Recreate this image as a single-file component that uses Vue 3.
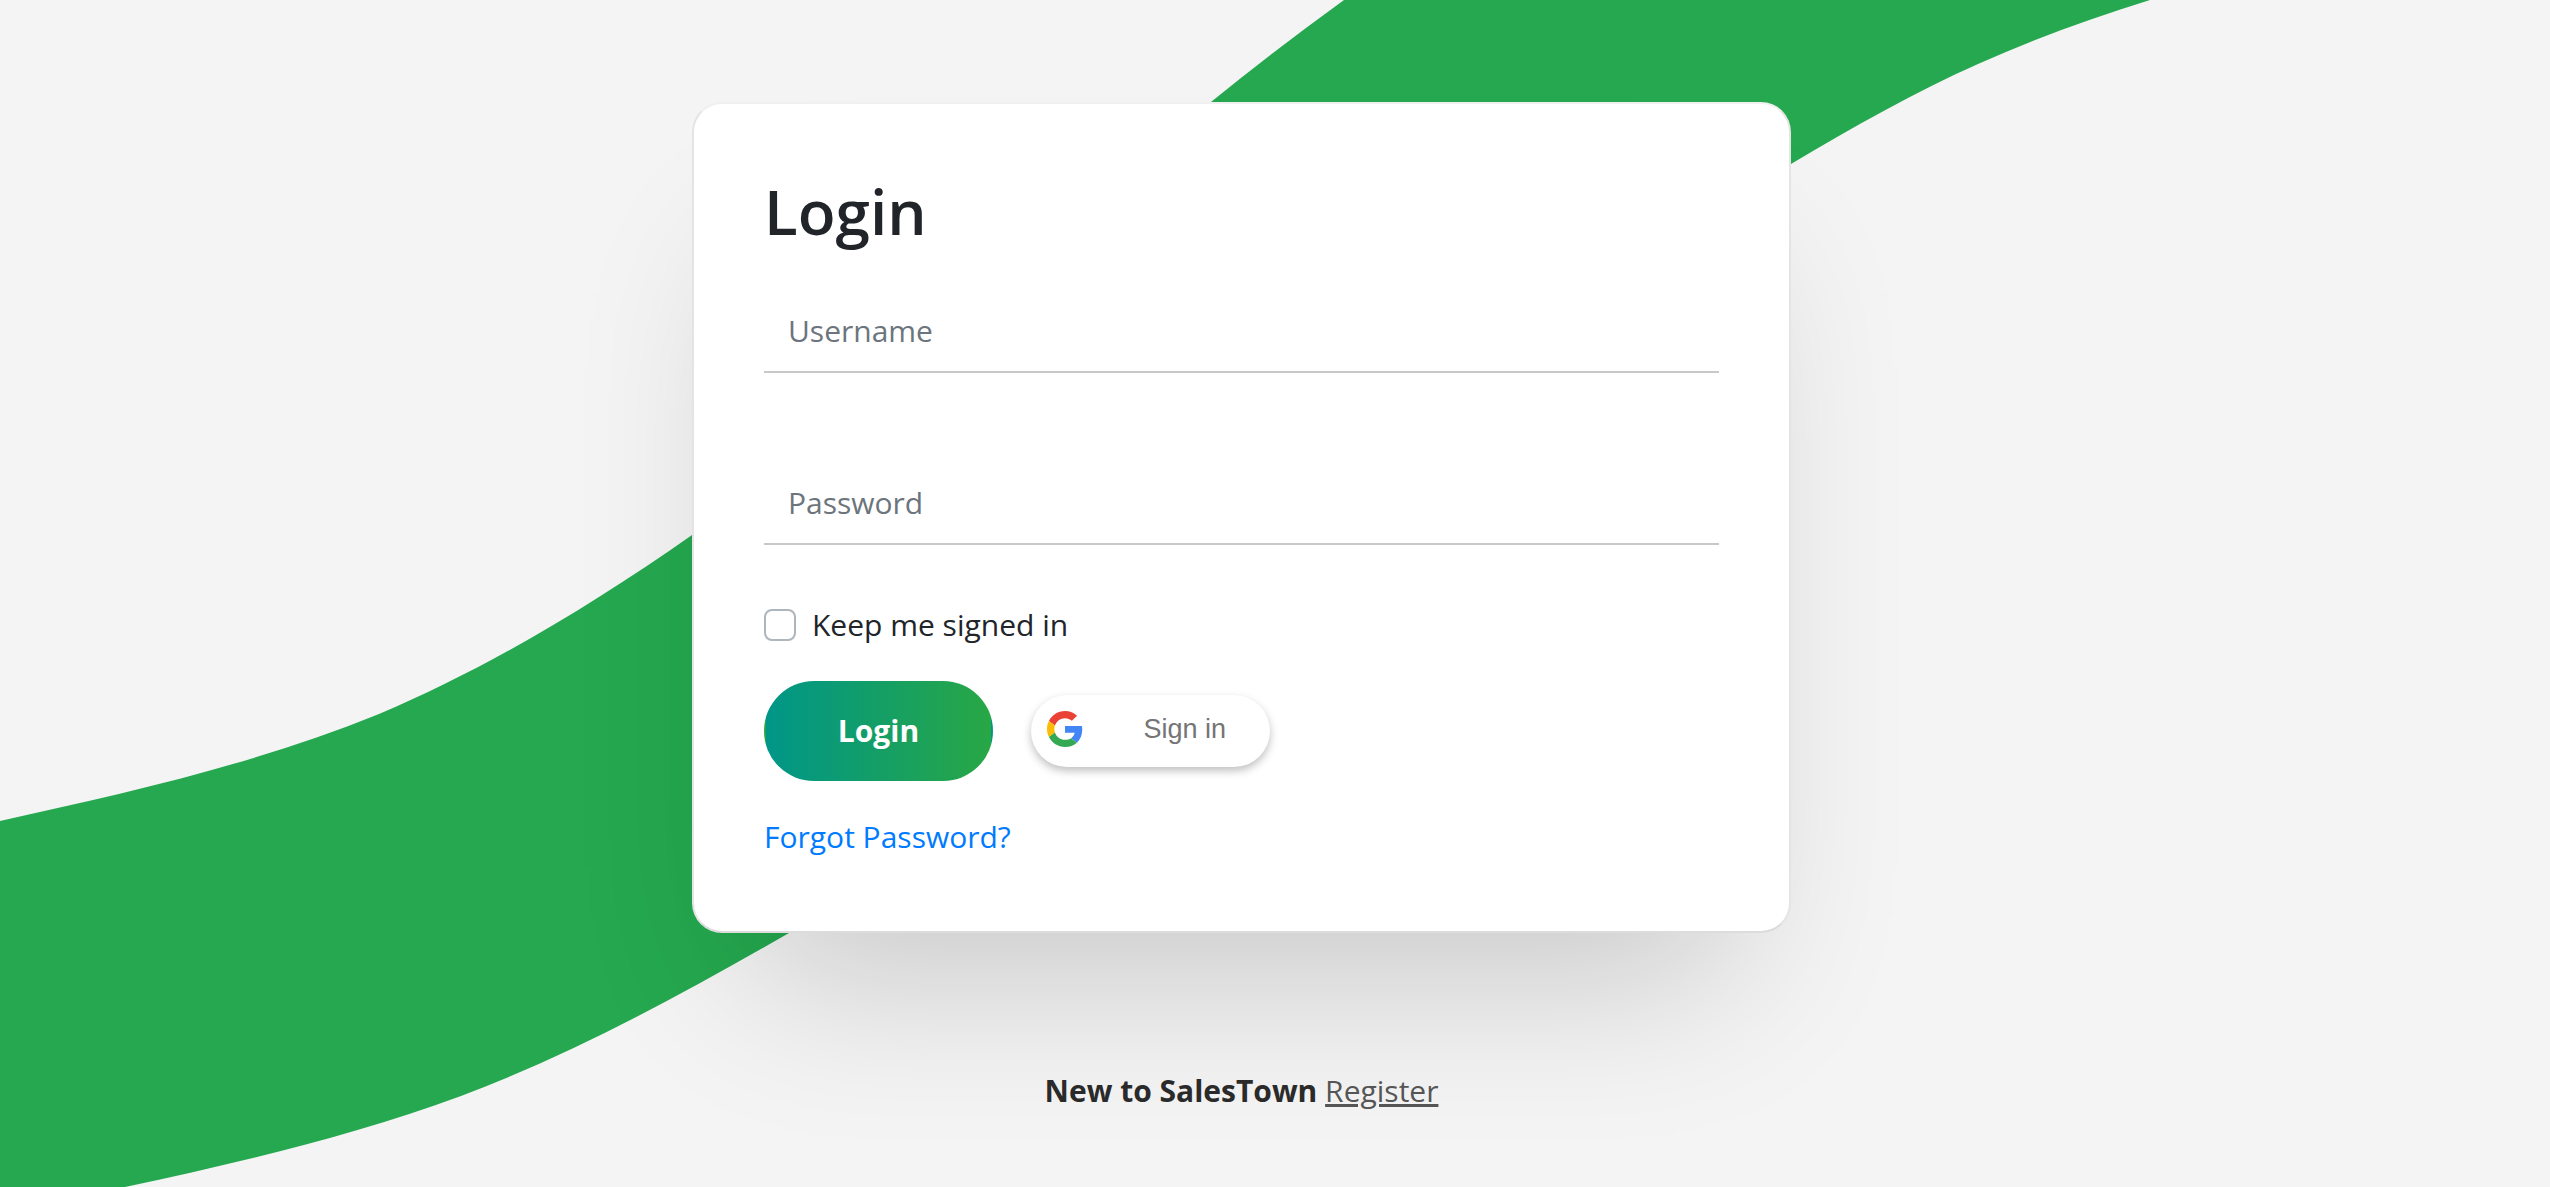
<script setup>
import { ref } from 'vue'

const username = ref('')
const password = ref('')
const remember = ref(false)
</script>

<template>
  <div class="page">
    <svg class="ribbon" viewBox="0 0 2550 1187" preserveAspectRatio="none" aria-hidden="true">
      <path
        d="M0 821C126 793 253 765 379 714C483 670 588 608 692 535C880 400 1040 245 1211 102Q1275 50 1344 0H2150C2092 18 2034 39 1978 64C1915 92 1853 127 1791 164C1440 380 1140 700 789 933C680 996 570 1055 461 1096C349 1137 237 1163 125 1187L0 1213Z"
      />
    </svg>

    <main class="content">
      <form class="card" @submit.prevent>
        <h1>Login</h1>
        <input v-model="username" class="field" type="text" placeholder="Username" aria-label="Username" />
        <input v-model="password" class="field" type="password" placeholder="Password" aria-label="Password" />
        <label class="remember">
          <input v-model="remember" type="checkbox" />
          <span>Keep me signed in</span>
        </label>
        <div class="actions">
          <button class="login" type="submit">Login</button>
          <button class="google" type="button">
            <svg viewBox="0 0 48 48" aria-hidden="true">
              <path fill="#ea4335" d="M24 9.5c3.54 0 6.71 1.22 9.21 3.6l6.85-6.85C35.9 2.38 30.47 0 24 0 14.62 0 6.51 5.38 2.56 13.22l7.98 6.19C12.43 13.72 17.74 9.5 24 9.5z" />
              <path fill="#4285f4" d="M46.98 24.55c0-1.57-.15-3.09-.38-4.55H24v9.02h12.94c-.58 2.96-2.26 5.48-4.78 7.18l7.73 6c4.51-4.18 7.09-10.36 7.09-17.65z" />
              <path fill="#fbbc05" d="M10.53 28.59c-.48-1.45-.76-2.99-.76-4.59s.27-3.14.76-4.59l-7.98-6.19C.92 16.46 0 20.12 0 24c0 3.88.92 7.54 2.56 10.78l7.97-6.19z" />
              <path fill="#34a853" d="M24 48c6.48 0 11.93-2.13 15.89-5.81l-7.73-6c-2.15 1.45-4.92 2.3-8.16 2.3-6.26 0-11.57-4.22-13.47-9.91l-7.98 6.19C6.51 42.62 14.62 48 24 48z" />
            </svg>
            <span>Sign in</span>
          </button>
        </div>
        <a class="forgot" href="#">Forgot Password?</a>
      </form>

      <p class="register"><strong>New to SalesTown</strong> <a href="#">Register</a></p>
    </main>
  </div>
</template>

<style>
body {
  margin: 0;
  background: #f4f4f4;
}
</style>

<style scoped>
.page {
  position: relative;
  min-height: 100vh;
  box-sizing: border-box;
  padding: 102px 67px 60px 0;
  overflow: hidden;
  font-family: "Segoe UI", "Open Sans", "Noto Sans", sans-serif;
  font-size: 30px;
  line-height: 48px;
  color: #212529;
}

.ribbon {
  position: absolute;
  inset: 0;
  width: 100%;
  height: 100%;
  fill: #25a84f;
}

.content {
  position: relative;
  display: flex;
  flex-direction: column;
  align-items: center;
}

.card {
  display: flex;
  flex-direction: column;
  box-sizing: border-box;
  width: 100%;
  max-width: 1099px;
  padding: 70px;
  border: 2px solid;
  border-color: #f0f0f0 #e4e4e4 #dcdcdc;
  border-radius: 30px;
  background: #fff;
  box-shadow: 0 100px 160px -60px rgba(0, 0, 0, 0.19);
}

h1 {
  margin: 0 0 40px;
  font-size: 62px;
  font-weight: 600;
  line-height: 75px;
}

.field {
  box-sizing: border-box;
  width: 100%;
  height: 84px;
  margin: 0 0 88px;
  padding: 0 24px;
  border: 0;
  border-bottom: 2px solid #c8c8c8;
  outline: 0;
  background: transparent;
  font: inherit;
  color: #212529;
}

.field::placeholder {
  color: #6c757d;
  opacity: 1;
}

.remember {
  display: flex;
  align-items: center;
  gap: 16px;
  margin-top: -32px;
}

.remember input {
  appearance: none;
  box-sizing: border-box;
  width: 32px;
  height: 32px;
  margin: 0;
  border: 2px solid #adb5bd;
  border-radius: 8px;
  background: #fff;
}

.remember input:checked {
  background: #28a745;
}

.actions {
  display: flex;
  align-items: center;
  gap: 38px;
  margin-top: 32px;
}

.login {
  width: 229px;
  height: 100px;
  padding: 0;
  border: 2px solid transparent;
  border-radius: 50px;
  background-image: linear-gradient(to right, #009688, #28a745);
  font: inherit;
  font-weight: 700;
  color: #fff;
}

.google {
  display: flex;
  align-items: center;
  box-sizing: border-box;
  width: 239px;
  height: 72px;
  padding: 0 44px 4px 16px;
  border: 0;
  border-radius: 36px;
  background: #fff;
  box-shadow: 0 4px 8px rgba(0, 0, 0, 0.25);
  font-family: "Liberation Sans", Arial, sans-serif;
  font-size: 27px;
  color: #757575;
}

.google svg {
  width: 36px;
  height: 36px;
}

.google span {
  margin-left: auto;
}

.forgot {
  align-self: flex-start;
  margin-top: 32px;
  color: #007bff;
  text-decoration: none;
}

.register {
  margin: 134px 0 0;
}

.register strong {
  color: #2a2a2a;
}

.register a {
  color: #555;
}
</style>
